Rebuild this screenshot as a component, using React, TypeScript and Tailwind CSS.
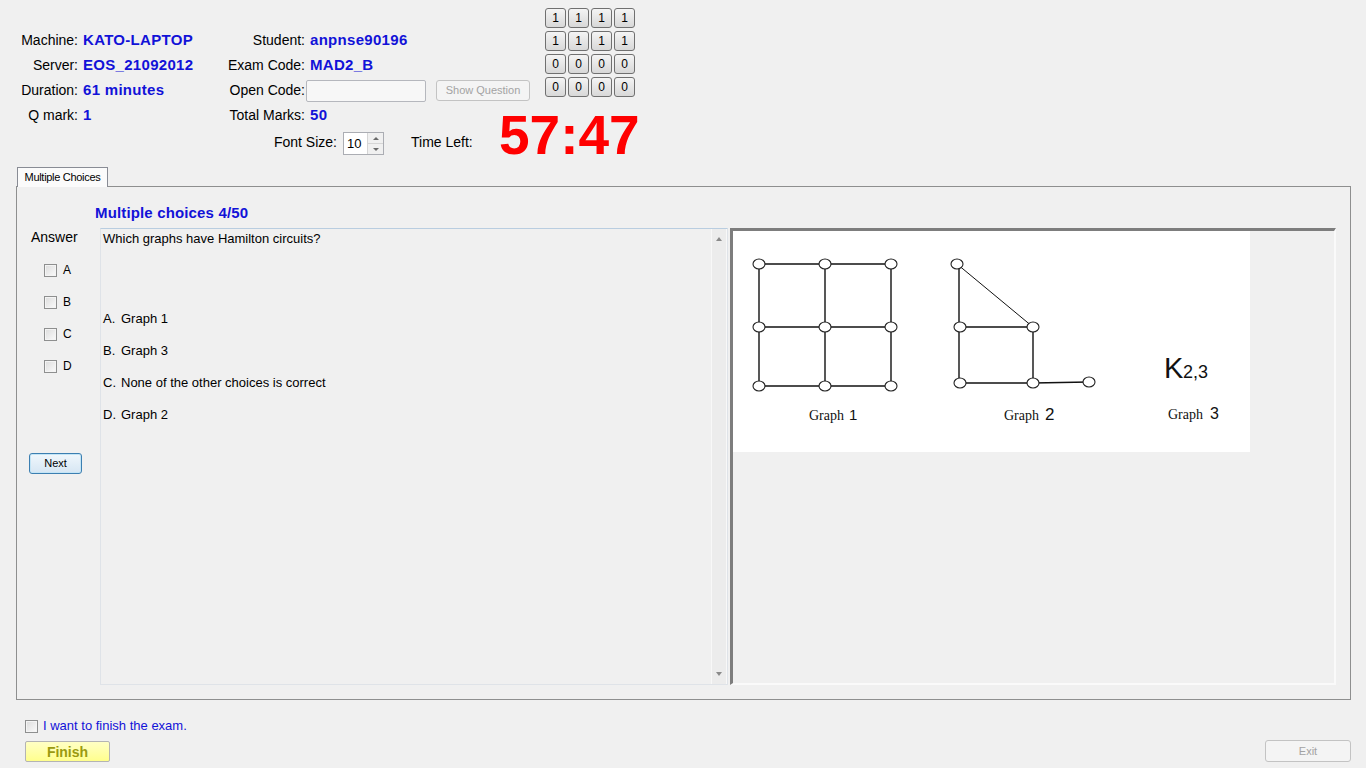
import React from "react";

const Box = () => (
  <div className="w-[13px] h-[13px] border border-[#8e8f8f] bg-gradient-to-br from-[#dcdcdc] to-[#fbfbfb] shadow-[inset_0_0_0_1px_#f4f4f4]" />
);

const Info = ({ label, value, w }: { label: string; value?: string; w: string }) => (
  <div className="h-[25px] flex items-center">
    <span className={`${w} text-right text-[14px] text-black`}>{label}</span>
    {value && <span className="ml-[5px] text-[15px] font-bold tracking-[0.3px] text-[#1212d8]">{value}</span>}
  </div>
);

const Graphs = () => (
  <svg width="517" height="221" viewBox="0 0 517 221" className="block bg-white">
    <g stroke="#111" strokeWidth="1.4" fill="none">
      {[33, 96, 155].map((y) => (
        <line key={"h" + y} x1="26" y1={y} x2="158" y2={y} />
      ))}
      {[26, 92, 158].map((x) => (
        <line key={"v" + x} x1={x} y1="33" x2={x} y2="155" />
      ))}
      <line x1="226" y1="33" x2="226" y2="152" />
      <line x1="224" y1="33" x2="300" y2="96" strokeWidth="1" />
      <line x1="227" y1="96" x2="300" y2="96" />
      <line x1="300" y1="96" x2="300" y2="152" />
      <line x1="227" y1="152" x2="300" y2="152" />
      <line x1="300" y1="152" x2="356" y2="151" />
    </g>
    <g stroke="#222" strokeWidth="1.1" fill="#fff">
      {[33, 96, 155].map((y) =>
        [26, 92, 158].map((x) => <ellipse key={x + "-" + y} cx={x} cy={y} rx="6" ry="5" />)
      )}
      {[
        [224, 33],
        [227, 96],
        [300, 96],
        [227, 152],
        [300, 152],
        [356, 151],
      ].map(([x, y]) => (
        <ellipse key={"g2" + x + y} cx={x} cy={y} rx="6" ry="5" />
      ))}
    </g>
    <g fill="#111">
      <text x="76" y="189" fontFamily="'Liberation Serif', serif" fontSize="14">Graph</text>
      <text x="116" y="189" fontFamily="'Liberation Sans', sans-serif" fontSize="15">1</text>
      <text x="271" y="189" fontFamily="'Liberation Serif', serif" fontSize="14">Graph</text>
      <text x="312" y="189" fontFamily="'Liberation Sans', sans-serif" fontSize="17">2</text>
      <text x="435" y="188" fontFamily="'Liberation Serif', serif" fontSize="14">Graph</text>
      <text x="477" y="188" fontFamily="'Liberation Sans', sans-serif" fontSize="16">3</text>
      <text x="431" y="147" fontFamily="'Liberation Sans', sans-serif" fontSize="29">K</text>
      <text x="450" y="147" fontFamily="'Liberation Sans', sans-serif" fontSize="18">2,3</text>
    </g>
  </svg>
);

const Option = ({ k, text, mt }: { k: string; text: string; mt: string }) => (
  <div className={`${mt} flex`}>
    <span className="w-[18px]">{k}</span>
    <span>{text}</span>
  </div>
);

export default function App() {
  const bits = ["1", "1", "1", "1", "1", "1", "1", "1", "0", "0", "0", "0", "0", "0", "0", "0"];
  return (
    <div className="w-[1366px] h-[768px] overflow-hidden bg-[#f0f0f0] font-['Liberation_Sans',Arial,sans-serif] text-black">
      {/* header */}
      <div className="flex flex-col pl-[20px] pt-[8px]">
        <div className="flex items-start">
          <div className="w-[190px] mt-[20px] flex flex-col">
            <Info w="w-[58px]" label="Machine:" value="KATO-LAPTOP" />
            <Info w="w-[58px]" label="Server:" value="EOS_21092012" />
            <Info w="w-[58px]" label="Duration:" value="61 minutes" />
            <Info w="w-[58px]" label="Q mark:" value="1" />
          </div>
          <div className="w-[320px] mt-[20px] flex flex-col">
            <Info w="w-[95px]" label="Student:" value="anpnse90196" />
            <Info w="w-[95px]" label="Exam Code:" value="MAD2_B" />
            <div className="h-[25px] flex items-center">
              <span className="w-[95px] text-right text-[14px]">Open Code:</span>
              <div className="ml-px w-[120px] h-[22px] bg-[#f7f7f7] border border-[#b5b7bd] rounded-[2px]" />
              <button className="ml-[10px] w-[94px] h-[21px] border border-[#c3c3c3] rounded-[3px] bg-[#f4f4f4] text-[11px] text-[#a3a3a3]">
                Show Question
              </button>
            </div>
            <Info w="w-[95px]" label="Total Marks:" value="50" />
          </div>
          <div className="ml-[15px] grid grid-cols-[repeat(4,21px)] gap-x-[2px] gap-y-[3px]">
            {bits.map((b, i) => (
              <div
                key={i}
                className="h-[20px] flex items-center justify-center border border-[#707070] rounded-[3px] bg-gradient-to-b from-[#f4f4f4] to-[#d8d8d8] text-[12px]"
              >
                {b}
              </div>
            ))}
          </div>
        </div>
        <div className="flex items-start h-[35px]">
          <span className="w-[317px] text-right text-[14px] leading-[16px] mt-[6px]">Font Size:</span>
          <div className="ml-[6px] mt-[4px] w-[41px] h-[23px] bg-white border border-[#abadb3] flex">
            <span className="flex-1 pl-[3px] text-[13px] leading-[21px]">10</span>
            <div className="w-[16px] flex flex-col border-l border-[#d5d5d5]">
              <div className="flex-1 flex items-center justify-center bg-[#f0f0f0] border-b border-[#d5d5d5]">
                <div className="w-0 h-0 border-x-[3px] border-x-transparent border-b-[3px] border-b-[#6a6a6a]" />
              </div>
              <div className="flex-1 flex items-center justify-center bg-[#f0f0f0]">
                <div className="w-0 h-0 border-x-[3px] border-x-transparent border-t-[3px] border-t-[#6a6a6a]" />
              </div>
            </div>
          </div>
          <span className="ml-[27px] w-[88px] text-[14px] leading-[16px] mt-[6px]">Time Left:</span>
          <span className="-mt-[20px] text-[55px] leading-none font-bold text-[#ff0000]">57:47</span>
        </div>
      </div>

      {/* tab control */}
      <div className="ml-[16px] mt-[4px] w-[1335px]">
        <div className="relative z-10 -mb-px ml-px w-[91px] h-[20px] border border-b-0 border-[#898c95] bg-[#fbfbfb] flex items-center justify-center text-[11px] tracking-[-0.3px]">
          Multiple Choices
        </div>
        <div className="h-[514px] border border-[#8e8f8f] flex flex-col pt-[17px]">
          <div className="pl-[78px] text-[15px] leading-[18px] font-bold tracking-[0.15px] text-[#1212d8]">Multiple choices 4/50</div>
          <div className="mt-[6px] flex h-[457px]">
            <div className="w-[83px] flex flex-col">
              <div className="pl-[14px] text-[14px] leading-[18px]">Answer</div>
              <div className="mt-[8px] flex flex-col">
                {["A", "B", "C", "D"].map((l) => (
                  <div key={l} className="h-[32px] flex items-center pl-[27px]">
                    <Box />
                    <span className="ml-[6px] text-[12px]">{l}</span>
                  </div>
                ))}
              </div>
              <button className="mt-[71px] ml-[12px] w-[53px] h-[21px] border border-[#3c7fb1] rounded-[3px] bg-gradient-to-b from-[#f0f7fc] to-[#d6e6f3] shadow-[inset_0_0_0_1px_#c4e5f6] text-[11px]">
                Next
              </button>
            </div>
            <div className="w-[628px] border border-[#dfe3e8] border-t-[#b9cde0] flex">
              <div className="flex-1 pl-[2px] pt-[2px] text-[13px] leading-[16px]">
                <div>Which graphs have Hamilton circuits?</div>
                <Option mt="mt-[64px]" k="A." text="Graph 1" />
                <Option mt="mt-[16px]" k="B." text="Graph 3" />
                <Option mt="mt-[16px]" k="C." text="None of the other choices is correct" />
                <Option mt="mt-[16px]" k="D." text="Graph 2" />
              </div>
              <div className="w-[16px] bg-[#ececec] border-x border-[#f8f8f8] flex flex-col justify-between items-center py-[8px]">
                <div className="w-0 h-0 border-x-[3px] border-x-transparent border-b-[4px] border-b-[#8a8a8a]" />
                <div className="w-0 h-0 border-x-[3px] border-x-transparent border-t-[4px] border-t-[#8a8a8a]" />
              </div>
            </div>
            <div className="ml-[2px] w-[606px] border-l-[3px] border-t-[3px] border-l-[#7d7d7d] border-t-[#7d7d7d] border-r-2 border-b-2 border-r-[#fafafa] border-b-[#fafafa]">
              <Graphs />
            </div>
          </div>
        </div>
      </div>

      {/* bottom */}
      <div className="mt-[18px] h-[16px] pl-[25px] flex items-center">
        <Box />
        <span className="ml-[5px] text-[13px] text-[#1212d8]">I want to finish the exam.</span>
      </div>
      <div className="mt-[6px] pl-[25px] pr-[15px] flex justify-between items-end">
        <button className="w-[85px] h-[21px] border border-[#b4b4b4] rounded-[2px] bg-gradient-to-b from-[#ffffc4] to-[#ffff8c] text-[14px] font-bold text-[#9a9a10]">
          Finish
        </button>
        <button className="w-[86px] h-[22px] border border-[#c3c3c3] rounded-[3px] bg-[#f4f4f4] text-[11px] text-[#a3a3a3]">
          Exit
        </button>
      </div>
    </div>
  );
}
